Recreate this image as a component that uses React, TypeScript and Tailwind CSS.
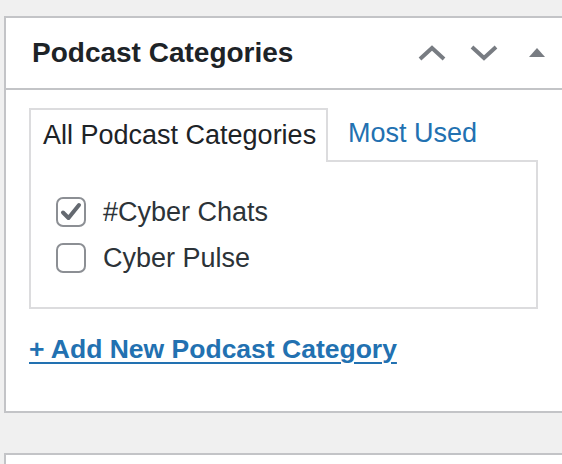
const FONT = { fontFamily: '"Liberation Sans", Arial, sans-serif' };

const CATEGORIES = [
  { name: '#Cyber Chats', checked: true },
  { name: 'Cyber Pulse', checked: false },
];

function Checkbox({ checked }: { checked: boolean }) {
  return (
    <span className="flex h-[30px] w-[30px] shrink-0 items-center justify-center rounded-[7px] border-2 border-[#8c8f94] bg-white">
      {checked && (
        <svg width="22" height="20" viewBox="0 0 22 20">
          <path d="M3 10.5 L8.5 16 L19 3" fill="none" stroke="#646970" strokeWidth="4" strokeLinecap="round" strokeLinejoin="round" />
        </svg>
      )}
    </span>
  );
}

export default function App() {
  return (
    <div className="h-[464px] w-[562px] overflow-hidden bg-[#f0f0f0] pl-1 pt-4" style={FONT}>
      <div className="w-[620px] border-2 border-[#c3c4c7] bg-white">
        <div className="flex h-[72px] items-center justify-between border-b-2 border-[#c3c4c7] pl-[26px] pr-[76px]">
          <h2 className="text-[28px] font-bold leading-none text-[#1d2327]">Podcast Categories</h2>
          <div className="flex items-center">
            <svg width="30" height="16" viewBox="0 0 30 16" className="mr-[22px]">
              <path d="M3 14 L15 3 L27 14" fill="none" stroke="#787c82" strokeWidth="4" />
            </svg>
            <svg width="30" height="16" viewBox="0 0 30 16" className="mr-[29px]">
              <path d="M3 2 L15 13 L27 2" fill="none" stroke="#787c82" strokeWidth="4" />
            </svg>
            <svg width="18" height="10" viewBox="0 0 18 10">
              <polygon points="9,0 17,9 1,9" fill="#787c82" />
            </svg>
          </div>
        </div>

        <div className="pl-[23px] pt-[18px] pb-[46px]">
          <div className="flex items-end">
            <div className="relative z-10 -mb-[2px] flex h-[54px] w-[299px] items-center border-2 border-b-0 border-[#dcdcde] bg-white pl-3 pb-[2px]">
              <span className="whitespace-nowrap text-[27px] leading-none text-[#1d2327]">All Podcast Categories</span>
            </div>
            <span className="ml-5 flex h-[52px] items-center pb-[2px] text-[27px] leading-none text-[#2271b1]">Most Used</span>
          </div>
          <div className="flex h-[149px] w-[509px] flex-col gap-4 border-2 border-[#dcdcde] pl-[25px] pt-[35px]">
            {CATEGORIES.map((c) => (
              <label key={c.name} className="flex items-center gap-[17px]">
                <Checkbox checked={c.checked} />
                <span className="text-[27px] leading-none text-[#2c3338]">{c.name}</span>
              </label>
            ))}
          </div>
          <a className="mt-[24px] block text-[26.5px] font-bold leading-[32px] text-[#2271b1] underline decoration-2 underline-offset-[4px]">
            + Add New Podcast Category
          </a>
        </div>
      </div>
      <div className="mt-[40px] h-[40px] w-[620px] border-2 border-[#c3c4c7] bg-white" />
    </div>
  );
}
